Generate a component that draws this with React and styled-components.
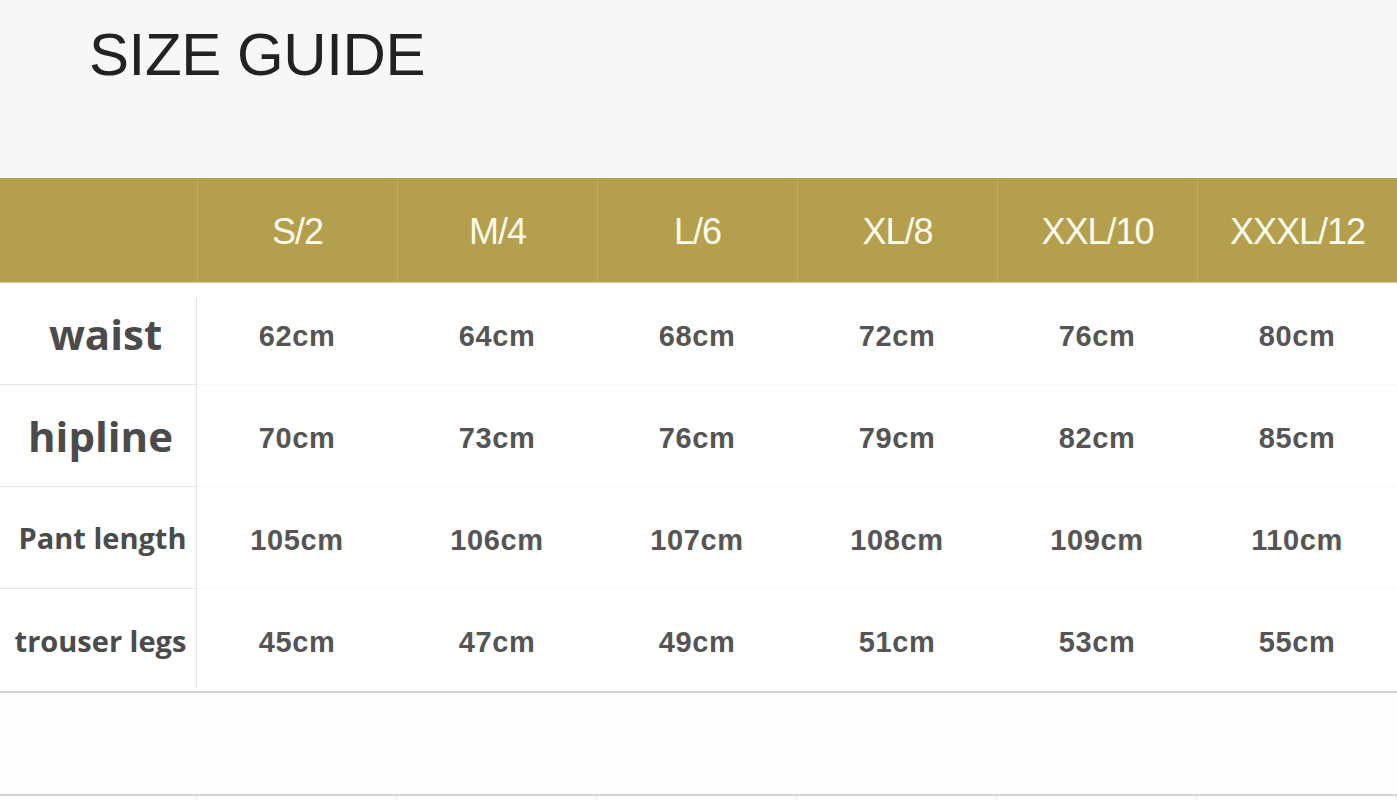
import React from 'react'
import styled, { createGlobalStyle } from 'styled-components'

const GlobalStyle = createGlobalStyle`
  html, body {
    margin: 0;
    padding: 0;
    background: #ffffff;
  }
  body {
    font-family: 'Liberation Sans', Arial, sans-serif;
  }
`

const Page = styled.div`
  width: 1397px;
  height: 800px;
  overflow: hidden;
  background: #fdfdfd;
`

const TitleBand = styled.div`
  height: 178px;
  background: #f7f7f7;
  padding: 22px 0 0 89px;
  box-sizing: border-box;
`

const Title = styled.h1`
  margin: 0;
  font-family: 'Liberation Sans', Arial, sans-serif;
  font-weight: 400;
  font-size: 60px;
  line-height: 66px;
  color: #222222;
  letter-spacing: -0.4px;
`

const Table = styled.div`
  display: grid;
  grid-template-columns: 197px repeat(6, 200px);
`

const HeadCell = styled.div`
  height: 105px;
  background: #b49f4f;
  border-left: ${p => (p.$first ? 'none' : '1px solid #c2ae62')};
  border-bottom: 1px solid #d9cb94;
  box-sizing: border-box;
  display: flex;
  align-items: center;
  justify-content: center;
  color: #fffbea;
  font-family: 'Liberation Sans', Arial, sans-serif;
  font-size: 36px;
  letter-spacing: -1px;
  padding-top: 4px;
`

const Body = styled.div`
  display: grid;
  grid-template-columns: 197px repeat(6, 200px);
  border-bottom: 2px solid #d2d2d2;
  background: #ffffff;
`

const LabelCell = styled.div`
  height: 102px;
  display: flex;
  align-items: center;
  justify-content: center;
  border-bottom: ${p => (p.$last ? 'none' : '1px solid #e6e6e6')};
  box-sizing: border-box;
  font-family: 'Open Sans', 'Noto Sans', sans-serif;
  font-weight: 700;
  font-size: ${p => p.$size}px;
  color: #4b4b4b;
  white-space: nowrap;
  padding-left: ${p => p.$shift || 0}px;
  position: relative;

  &::after {
    content: '';
    position: absolute;
    right: 0;
    top: ${p => (p.$first ? '15px' : '0')};
    bottom: ${p => (p.$last ? '4px' : '-1px')};
    border-right: 1px solid #e3e3e3;
  }
`

const ValueCell = styled.div`
  height: 102px;
  display: flex;
  align-items: center;
  justify-content: center;
  border-bottom: ${p => (p.$last ? 'none' : '1px solid #fafafa')};
  box-sizing: border-box;
  font-family: 'Liberation Sans', Arial, sans-serif;
  font-weight: 700;
  font-size: 29px;
  letter-spacing: 0.6px;
  color: #555555;
  padding-top: 5px;
`

const Spacer = styled.div`
  height: 101px;
  background: #fdfdfd;
  border-bottom: 2px solid #d6d6d6;
`

const NextTable = styled.div`
  display: grid;
  grid-template-columns: 197px repeat(6, 200px);
  height: 8px;
  & > div {
    border-right: 1px solid #e8e8e8;
  }
`

const sizes = ['S/2', 'M/4', 'L/6', 'XL/8', 'XXL/10', 'XXXL/12']

const rows = [
  { label: 'waist', size: 42, shift: 14, values: [62, 64, 68, 72, 76, 80] },
  { label: 'hipline', size: 42, shift: 4, values: [70, 73, 76, 79, 82, 85] },
  { label: 'Pant length', size: 29, shift: 8, values: [105, 106, 107, 108, 109, 110] },
  { label: 'trouser legs', size: 29, shift: 4, values: [45, 47, 49, 51, 53, 55] }
]

const App = () => (
  <Page>
    <GlobalStyle />
    <TitleBand>
      <Title>SIZE GUIDE</Title>
    </TitleBand>
    <Table>
      <HeadCell $first />
      {sizes.map(s => <HeadCell key={s}>{s}</HeadCell>)}
    </Table>
    <Body>
      {rows.map((r, i) => (
        <React.Fragment key={r.label}>
          <LabelCell
            $size={r.size}
            $shift={r.shift}
            $first={i === 0}
            $last={i === rows.length - 1}
          >
            {r.label}
          </LabelCell>
          {r.values.map(v => (
            <ValueCell key={v} $last={i === rows.length - 1}>{v}cm</ValueCell>
          ))}
        </React.Fragment>
      ))}
    </Body>
    <Spacer />
    <NextTable>
      {Array.from({ length: 7 }).map((_, i) => <div key={i} />)}
    </NextTable>
  </Page>
)

export default App
